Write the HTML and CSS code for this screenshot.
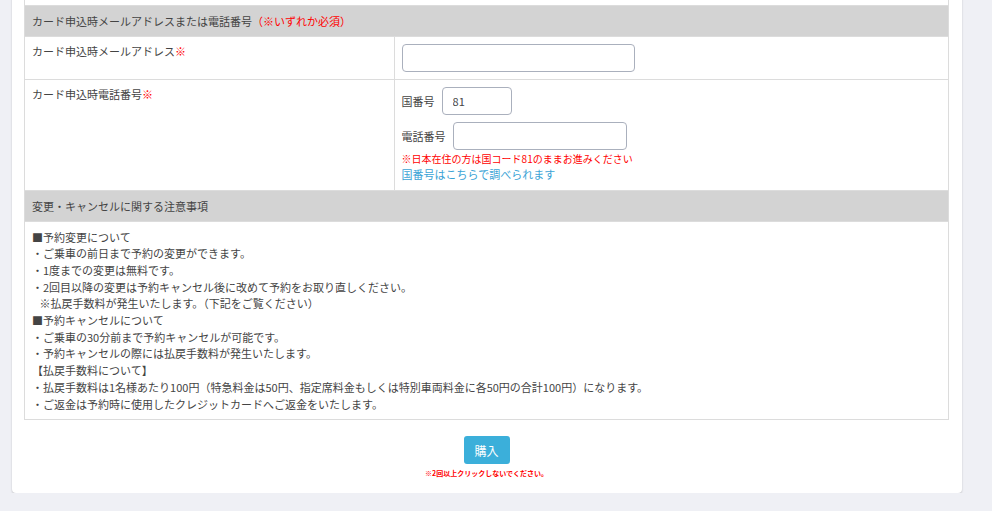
FILE: index.html
```html
<!DOCTYPE html>
<html lang="ja">
<head>
    <meta charset="UTF-8">
    <meta name="viewport" content="width=device-width, initial-scale=1.0">
    <title>予約確認</title>
    <link rel="stylesheet" href="styles.css">
</head>
<body>

    <div class="card">
        <table class="form-table">
            <!-- previous row (scrolled off) -->
            <tr class="prev">
                <td colspan="2"></td>
            </tr>

            <tr>
                <th colspan="2">カード申込時メールアドレスまたは電話番号<span class="req">（※いずれか必須）</span></th>
            </tr>
            <tr>
                <td class="label">カード申込時メールアドレス<span class="req">※</span></td>
                <td><input type="text" class="input-mail"></td>
            </tr>
            <tr>
                <td class="label">カード申込時電話番号<span class="req">※</span></td>
                <td>
                    <div class="field">
                        <span>国番号</span>
                        <input type="text" class="input-code" value="81">
                    </div>
                    <div class="field field-tel">
                        <span>電話番号</span>
                        <input type="text" class="input-tel">
                    </div>
                    <p class="note">※日本在住の方は国コード81のままお進みください</p>
                    <a href="#" class="link">国番号はこちらで調べられます</a>
                </td>
            </tr>

            <tr>
                <th colspan="2">変更・キャンセルに関する注意事項</th>
            </tr>
            <tr>
                <td colspan="2" class="notes">
                    ■予約変更について<br>
                    ・ご乗車の前日まで予約の変更ができます。<br>
                    ・1度までの変更は無料です。<br>
                    ・2回目以降の変更は予約キャンセル後に改めて予約をお取り直しください。<br>
                    &nbsp;&nbsp;&nbsp;※払戻手数料が発生いたします。（下記をご覧ください）<br>
                    ■予約キャンセルについて<br>
                    ・ご乗車の30分前まで予約キャンセルが可能です。<br>
                    ・予約キャンセルの際には払戻手数料が発生いたします。<br>
                    【払戻手数料について】<br>
                    ・払戻手数料は1名様あたり100円（特急料金は50円、指定席料金もしくは特別車両料金に各50円の合計100円）になります。<br>
                    ・ご返金は予約時に使用したクレジットカードへご返金をいたします。
                </td>
            </tr>
        </table>

        <div class="actions">
            <button class="btn-buy">購入</button>
            <p class="warn">※2回以上クリックしないでください。</p>
        </div>
    </div>

</body>
</html>
```

FILE: styles.css
```css
/* Basic Styling */
body {
    margin: 0;
    background: #eff0f5;
    font-family: "Noto Sans CJK JP", sans-serif;
    font-size: 11px;
    line-height: 1.5;
    color: #444;
}
.card {
    width: 950px;
    margin: -30px 0 0 12px;
    padding: 0 13px 15px 12px;
    box-sizing: border-box;
    background: #fff;
    border-radius: 0 0 4px 4px;
    box-shadow: 0 1px 2px rgba(0, 0, 0, 0.2);
}
.form-table {
    width: 100%;
    border-collapse: collapse;
}
.form-table th,
.form-table td {
    border: 1px solid #dcdcdc;
    text-align: left;
    vertical-align: top;
}
.form-table th {
    background: #d3d3d3;
    font-weight: normal;
    line-height: 18px;
    padding: 6px 7px;
}
.form-table td {
    padding: 7px 7px;
}
.form-table .prev td {
    height: 21px;
    border-top: none;
}
.form-table .label {
    width: 40%;
    padding-top: 6px;
}
.req {
    color: #f00;
}
input {
    display: block;
    box-sizing: border-box;
    height: 28px;
    border: 1px solid #aab0bd;
    border-radius: 4px;
    font-family: "Noto Sans CJK JP", sans-serif;
    font-size: 11px;
    color: #444;
    padding: 0 10px;
}
.input-mail {
    width: 233px;
}
.input-code {
    width: 70px;
}
.input-tel {
    width: 174px;
}
.field {
    display: flex;
    align-items: center;
    gap: 7px;
}
.field-tel {
    margin-top: 7px;
}
.note {
    margin: 1px 0 0;
    color: #f00;
    font-size: 10px;
}
.link {
    display: block;
    color: #3aa3d6;
    text-decoration: none;
}
.notes {
    line-height: 16.7px;
}
.actions {
    text-align: center;
    padding-top: 16px;
}
.btn-buy {
    width: 46px;
    height: 28px;
    border: none;
    border-radius: 3px;
    background: #3bafda;
    color: #fff;
    font-family: "Noto Sans CJK JP", sans-serif;
    font-size: 12px;
    padding: 0;
}
.warn {
    margin: 4px 0 0;
    color: #f00;
    font-size: 7px;
    font-weight: bold;
    line-height: 10px;
}
```
